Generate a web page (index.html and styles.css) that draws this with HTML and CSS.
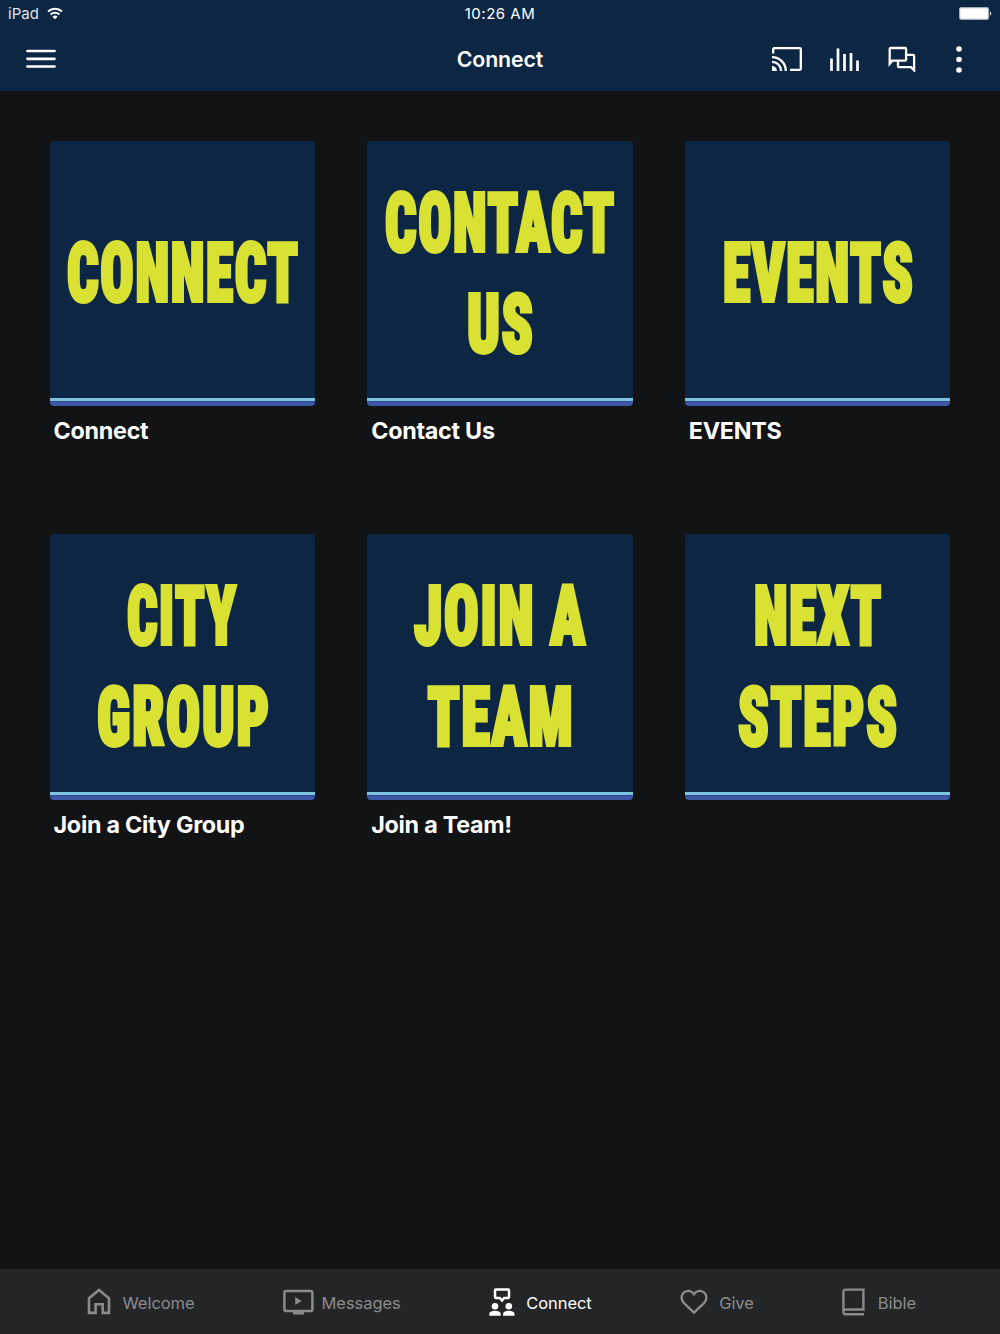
FILE: index.html
```html
<!DOCTYPE html>
<html lang="en">
<head>
    <meta charset="UTF-8">
    <meta name="viewport" content="width=device-width, initial-scale=1.0">
    <title>Connect</title>
    <link rel="stylesheet" href="styles.css">
</head>
<body>
    <header class="site-header">
        <div class="status-bar">
            <div class="status-left">
                <span>iPad</span>
                <svg class="wifi" width="16" height="13" viewBox="0 0 16 13">
                    <path d="M1 4.6a10.2 10.2 0 0 1 14 0M3.6 7.5a6.4 6.4 0 0 1 8.8 0" fill="none" stroke="#fff" stroke-width="2"/>
                    <path d="M8 12.3 5.4 9.7a3.8 3.8 0 0 1 5.2 0z" fill="#fff"/>
                </svg>
            </div>
            <div class="status-time">10:26 AM</div>
            <div class="status-right">
                <svg width="33" height="13" viewBox="0 0 33 13">
                    <rect x=".6" y=".6" width="29" height="11.8" rx="1.8" fill="#fff" stroke="#a3adba" stroke-width="1.2"/>
                    <path d="M31 4.5c1.6.4 1.6 3.6 0 4z" fill="#fff"/>
                </svg>
            </div>
        </div>
        <div class="title-bar">
            <button class="icon-btn menu-btn" aria-label="Menu">
                <svg width="30" height="20" viewBox="0 0 30 20"><path d="M1.5 2h27M1.5 9.8h27M1.5 17.5h27" stroke="#fff" stroke-width="2.7" stroke-linecap="round"/></svg>
            </button>
            <h1 class="title">Connect</h1>
            <div class="actions">
                <button class="icon-btn" aria-label="Cast">
                    <svg width="30" height="24" viewBox="0 0 30 24" fill="none" stroke="#fff" stroke-width="2.3">
                        <path d="M1.2 6.4V2.2q0-1 1-1h25.6q1 0 1 1v19.6q0 1-1 1H18M0 10.1A13.8 13.8 0 0 1 13.8 23.9M0 14.8a9.1 9.1 0 0 1 9.1 9.1"/>
                        <path d="M0 19a4.9 4.9 0 0 1 4.9 4.9H0z" fill="#fff" stroke="none"/>
                    </svg>
                </button>
                <button class="icon-btn" aria-label="Audio">
                    <svg width="30" height="24" viewBox="0 0 30 24"><path d="M1.5 11.5V24M8 1.5V24M14.5 7V24M21 6V24M27.5 13.5V24" stroke="#fff" stroke-width="2.7"/></svg>
                </button>
                <button class="icon-btn" aria-label="Chat">
                    <svg width="28" height="26" viewBox="0 0 28 26" fill="none" stroke="#fff" stroke-width="2.3">
                        <path d="M1.7 17.8V3q0-1 1-1h14.4q1 0 1 1v10.7q0 1-1 1H4.2z"/>
                        <path d="M18.4 8.9h6.7q1 0 1 1v14.4l-3.1-3.1H11q-1 0-1-1v-5.3"/>
                    </svg>
                </button>
                <button class="icon-btn more-btn" aria-label="More">
                    <svg width="6" height="27" viewBox="0 0 6 27" fill="#fff"><circle cx="3" cy="3" r="2.8"/><circle cx="3" cy="13.5" r="2.8"/><circle cx="3" cy="24" r="2.8"/></svg>
                </button>
            </div>
        </div>
    </header>

    <main class="grid">
        <a class="card">
            <svg class="tile" viewBox="0 0 266 266">
                <text x="17" y="160.5" textLength="233" lengthAdjust="spacingAndGlyphs">CONNECT</text>
            </svg>
            <span class="label">Connect</span>
        </a>
        <a class="card">
            <svg class="tile" viewBox="0 0 266 266">
                <text x="18" y="110" textLength="231" lengthAdjust="spacingAndGlyphs">CONTACT</text>
                <text x="100" y="211" textLength="68" lengthAdjust="spacingAndGlyphs">US</text>
            </svg>
            <span class="label">Contact Us</span>
        </a>
        <a class="card">
            <svg class="tile" viewBox="0 0 266 266">
                <text x="38" y="160.5" textLength="192" lengthAdjust="spacingAndGlyphs">EVENTS</text>
            </svg>
            <span class="label">EVENTS</span>
        </a>
        <a class="card">
            <svg class="tile" viewBox="0 0 266 266">
                <text x="77" y="110" textLength="111" lengthAdjust="spacingAndGlyphs">CITY</text>
                <text x="47" y="211" textLength="174" lengthAdjust="spacingAndGlyphs">GROUP</text>
            </svg>
            <span class="label">Join a City Group</span>
        </a>
        <a class="card">
            <svg class="tile" viewBox="0 0 266 266">
                <text x="47" y="110" textLength="173" lengthAdjust="spacingAndGlyphs">JOIN A</text>
                <text x="60.5" y="211" textLength="147" lengthAdjust="spacingAndGlyphs">TEAM</text>
            </svg>
            <span class="label">Join a Team!</span>
        </a>
        <a class="card">
            <svg class="tile" viewBox="0 0 266 266">
                <text x="69" y="110" textLength="129" lengthAdjust="spacingAndGlyphs">NEXT</text>
                <text x="53" y="211" textLength="161" lengthAdjust="spacingAndGlyphs">STEPS</text>
            </svg>
        </a>
    </main>

    <nav class="tab-bar">
        <a class="tab">
            <svg width="24" height="27" viewBox="0 0 24 27"><path d="M2 10.3 12 2l10 8.3v14.6h-6.3v-8.6H8.6v8.6H2z" fill="none" stroke="currentColor" stroke-width="2.6"/></svg>
            <span>Welcome</span>
        </a>
        <a class="tab tab-messages">
            <svg width="31" height="26" viewBox="0 0 31 26"><rect x="1.4" y="1.9" width="28" height="20" rx="1.5" fill="none" stroke="currentColor" stroke-width="2.5"/><path d="M12.2 8v8l6.5-4zM10 22h11v3.5H10z" fill="currentColor"/></svg>
            <span>Messages</span>
        </a>
        <a class="tab active">
            <svg width="26" height="28" viewBox="0 0 26 28">
                <path d="M6.8 1.6h12.4q.8 0 .8.8v6.7q0 .8-.8.8h-4L13 12.5l-2.2-2.6h-4q-.8 0-.8-.8V2.4q0-.8.8-.8z" fill="none" stroke="currentColor" stroke-width="2.5"/>
                <g fill="currentColor"><circle cx="6" cy="18.3" r="3.3"/><circle cx="19.8" cy="18.3" r="3.3"/><path d="M.3 27.7v-2c0-2 3-3 5.7-3s5.7 1 5.7 3v2zM14.1 27.7v-2c0-2 3-3 5.7-3s5.7 1 5.7 3v2z"/></g>
            </svg>
            <span>Connect</span>
        </a>
        <a class="tab">
            <svg width="28" height="26" viewBox="0 0 28 26"><path d="M14 23.7 4 14.2C1.2 11.4.7 6.8 3.3 4 6.7.5 11.7 1.5 14 5.2 16.3 1.5 21.3.5 24.7 4c2.6 2.8 2.1 7.4-.7 10.2z" fill="none" stroke="currentColor" stroke-width="2.4"/></svg>
            <span>Give</span>
        </a>
        <a class="tab tab-bible">
            <svg width="23" height="28" viewBox="0 0 23 28"><path d="M22 26.3H4q-2.6 0-2.6-2.6V4.2q0-2.6 2.6-2.6h17.4v19.9H4q-2.6 0-2.6 2.2" fill="none" stroke="currentColor" stroke-width="2.4"/></svg>
            <span>Bible</span>
        </a>
    </nav>
</body>
</html>
```
FILE: styles.css
```css
* {
    box-sizing: border-box;
}

body {
    font-family: Inter, "Liberation Sans", sans-serif;
    background: #121315;
    color: #fff;
    margin: 0;
    height: 1334px;
    display: flex;
    flex-direction: column;
}

.site-header {
    background: #0d2644;
    height: 91px;
}

.status-bar {
    display: grid;
    grid-template-columns: 1fr auto 1fr;
    align-items: center;
    height: 27px;
    padding: 0 8px;
    font-size: 15px;
}

.status-left {
    display: flex;
    align-items: center;
    gap: 8px;
    color: #dfe4ea;
}

.status-time {
    letter-spacing: 0.5px;
}

.status-right {
    display: flex;
    justify-content: flex-end;
}

.title-bar {
    display: grid;
    grid-template-columns: 1fr auto 1fr;
    align-items: center;
    height: 64px;
    padding: 0 26px;
}

.title {
    font-size: 21.3px;
    font-weight: 600;
    letter-spacing: -0.1px;
    margin: 0;
}

.icon-btn {
    background: none;
    border: none;
    padding: 0;
    display: flex;
}

.actions {
    display: flex;
    justify-content: flex-end;
    align-items: center;
    gap: 28px;
    padding-right: 12px;
}

.more-btn {
    margin-left: 12px;
}

.grid {
    flex: 1;
    display: grid;
    grid-template-columns: repeat(3, 1fr);
    grid-auto-rows: 393.5px;
    column-gap: 52px;
    padding: 49.5px 49.5px 0;
}

.tile {
    display: block;
    width: 100%;
    overflow: visible;
    border-radius: 4px;
    background: linear-gradient(to top, #3c57a8 4px, #203c70 5px, #7cc3df 5.5px, #7cc3df 7.5px, #0d2644 8px);
}

.tile text {
    font-family: Roboto, "Liberation Sans", sans-serif;
    font-stretch: 75%;
    font-weight: 900;
    font-size: 82px;
    letter-spacing: 2.5px;
    fill: #d9e132;
    stroke: #d9e132;
    stroke-width: 4px;
}

.label {
    display: block;
    padding: 10px 4px;
    font-size: 23.3px;
    font-weight: 650;
    letter-spacing: -0.25px;
    line-height: 29px;
}

.tab-bar {
    display: flex;
    justify-content: space-between;
    align-items: center;
    height: 65px;
    padding: 0 84px 0 87px;
    background: #242527;
    color: #8b8b8c;
    font-size: 16.5px;
    letter-spacing: -0.05px;
}

.tab {
    display: flex;
    align-items: center;
    gap: 11.5px;
}

.tab span {
    padding-top: 3px;
}

.tab-messages {
    gap: 8px;
}

.tab-bible {
    gap: 13px;
}

.active {
    color: #fff;
}
```
